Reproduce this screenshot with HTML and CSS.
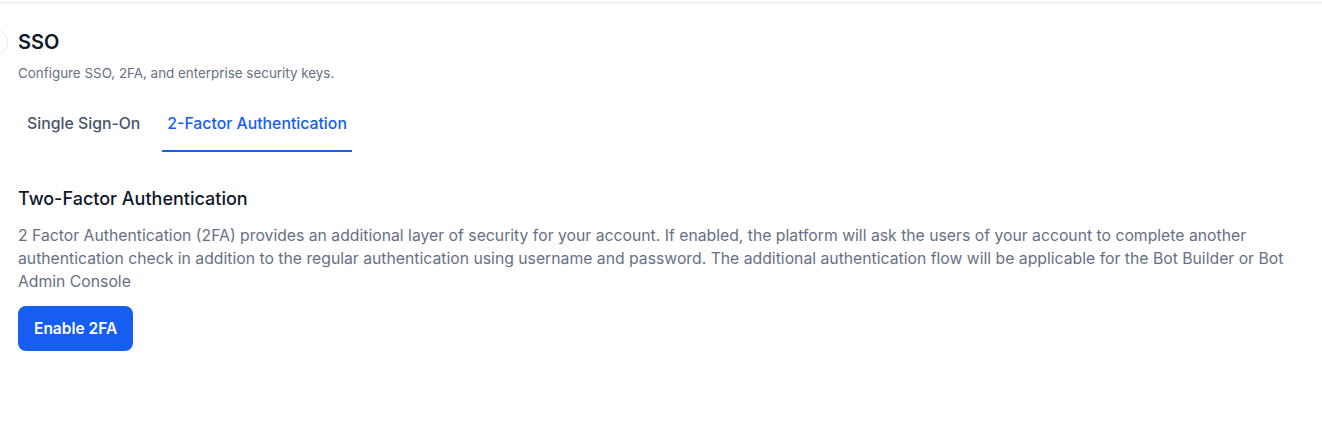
FILE: index.html
```html
<!DOCTYPE html>
<html lang="en">
<head>
    <meta charset="UTF-8">
    <title>SSO</title>
    <link rel="stylesheet" href="styles.css">
</head>
<body>
    <div class="topbar"></div>
    <button class="collapse-btn" type="button" aria-label="Collapse"></button>

    <main class="page">
        <h1 class="page-title">SSO</h1>
        <p class="page-sub">Configure SSO, 2FA, and enterprise security keys.</p>

        <nav class="tabs">
            <a class="tab" href="#">Single Sign-On</a>
            <a class="tab active" href="#">2-Factor Authentication</a>
        </nav>

        <section class="panel">
            <h2 class="panel-title">Two-Factor Authentication</h2>
            <p class="panel-text">2 Factor Authentication (2FA) provides an additional layer of security for your account. If enabled, the platform will ask the users of your account to complete another authentication check in addition to the regular authentication using username and password. The additional authentication flow will be applicable for the Bot Builder or Bot Admin Console</p>
            <button class="btn-primary" type="button">Enable 2FA</button>
        </section>
    </main>
</body>
</html>
```

FILE: styles.css
```css
body {
    margin: 0;
    font-family: Inter, "Noto Sans", sans-serif;
    background: #fff;
    color: #101828;
    position: relative;
}
.topbar {
    height: 2px;
    border-bottom: 1px solid #e4e7ec;
    box-shadow: 0 1px 2px rgba(16, 24, 40, 0.05);
}
.collapse-btn {
    position: absolute;
    left: -19px;
    top: 29px;
    width: 27px;
    height: 27px;
    border-radius: 50%;
    border: 1px solid #e4e7ec;
    background: #fff;
    padding: 0;
}
.page {
    padding: 25px 18px 0 18px;
}
.page-title {
    margin: 0;
    font-size: 20px;
    font-weight: 600;
    line-height: 28px;
}
.page-sub {
    margin: 8px 0 0;
    font-size: 13.4px;
    line-height: 18px;
    color: #667085;
}
.tabs {
    display: flex;
    gap: 17px;
    margin-top: 27px;
    padding-left: 4px;
}
.tab {
    display: block;
    padding: 4px 5px 15px;
    font-size: 15.8px;
    font-weight: 500;
    line-height: 22px;
    color: #475467;
    text-decoration: none;
    border-bottom: 2px solid transparent;
}
.tab.active {
    color: #155eef;
    border-bottom-color: #155eef;
}
.panel {
    padding-top: 35px;
}
.panel-title {
    margin: 0;
    font-size: 18px;
    font-weight: 500;
    line-height: 24px;
}
.panel-text {
    margin: 13px 0 0;
    max-width: 1290px;
    font-size: 15.75px;
    line-height: 23px;
    color: #667085;
}
.btn-primary {
    margin-top: 13px;
    height: 45px;
    padding: 0 16px;
    border: none;
    border-radius: 8px;
    background: #155eef;
    color: #fff;
    font-family: inherit;
    font-size: 15.5px;
    font-weight: 600;
}
```
